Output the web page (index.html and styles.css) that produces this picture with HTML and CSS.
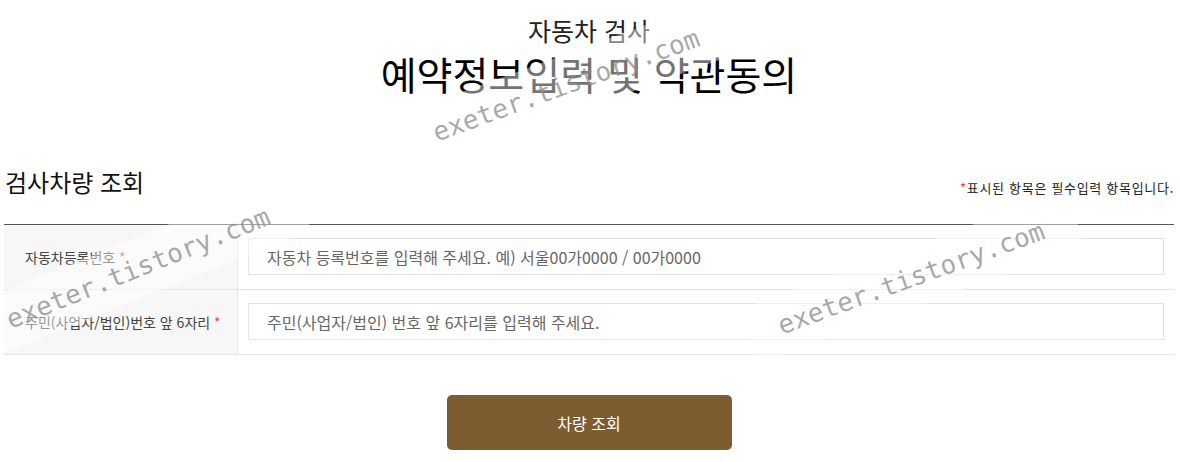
FILE: index.html
```html
<!DOCTYPE html>
<html lang="ko">
<head>
    <meta charset="UTF-8">
    <meta name="viewport" content="width=device-width, initial-scale=1.0">
    <title>자동차 검사 - 예약정보입력 및 약관동의</title>
    <link rel="stylesheet" href="styles.css">
</head>
<body>
    <div class="page">
        <div class="page-head">
            <p class="sub-title">자동차 검사</p>
            <h1 class="main-title">예약정보입력 및 약관동의</h1>
        </div>

        <div class="section-head">
            <h2 class="section-title">검사차량 조회</h2>
            <p class="note"><span class="req">*</span>표시된 항목은 필수입력 항목입니다.</p>
        </div>

        <div class="form-table">
            <div class="row">
                <label class="label" for="carNo"><span>자동차등록번호 <span class="req">*</span></span></label>
                <div class="field">
                    <input type="text" class="input" id="carNo" placeholder="자동차 등록번호를 입력해 주세요. 예) 서울00가0000 / 00가0000">
                </div>
            </div>
            <div class="row">
                <label class="label" for="birth"><span>주민(사업자/법인)번호 앞 6자리 <span class="req">*</span></span></label>
                <div class="field">
                    <input type="text" class="input" id="birth" placeholder="주민(사업자/법인) 번호 앞 6자리를 입력해 주세요.">
                </div>
            </div>
        </div>

        <div class="actions">
            <button class="btn-search">차량 조회</button>
        </div>
    </div>

    <!-- watermarks -->
    <div class="watermark wm-top">exeter.tistory.com</div>
    <div class="watermark wm-left">exeter.tistory.com</div>
    <div class="watermark wm-right">exeter.tistory.com</div>
</body>
</html>
```

FILE: styles.css
```css
body {
    margin: 0;
    font-family: "Noto Sans CJK KR", "Noto Sans", sans-serif;
    color: #222;
    background-color: #fff;
    position: relative;
    height: 462px;
    overflow: hidden;
}
.page {
    width: 1170px;
    margin: 0 4px;
}

.page-head {
    text-align: center;
    padding-top: 13px;
}
.sub-title {
    margin: 0;
    font-size: 25px;
    line-height: 34px;
    color: #222;
}
.main-title {
    margin: 0;
    font-size: 39px;
    font-weight: 400;
    line-height: 52px;
    color: #000;
}

.section-head {
    display: flex;
    justify-content: space-between;
    align-items: flex-end;
    margin-top: 68px;
    padding-bottom: 27px;
    border-bottom: 1px solid #555;
}
.section-title {
    margin: 0 0 0 1px;
    font-size: 24px;
    font-weight: 400;
    line-height: 30px;
    color: #111;
}
.note {
    margin: 0;
    font-size: 13px;
    line-height: 18px;
    letter-spacing: 0.7px;
    color: #222;
}
.req {
    color: #e2483f;
}

.form-table .row {
    display: grid;
    grid-template-columns: 234px 1fr;
    border-bottom: 1px solid #e5e5e5;
}
.form-table .label {
    display: flex;
    align-items: center;
    padding-left: 21px;
    font-size: 14px;
    color: #444;
    background-color: #f7f7f7;
    border-right: 1px solid #e5e5e5;
}
.form-table .field {
    padding: 13px 10px 14px 10px;
}
.input {
    display: block;
    width: 100%;
    box-sizing: border-box;
    height: 37px;
    padding: 0 18px;
    border: 1px solid #e3e3e3;
    font-family: inherit;
    font-size: 16px;
    color: #333;
    outline: none;
}
.input::placeholder {
    color: #666;
}

.actions {
    display: flex;
    justify-content: center;
    margin-top: 40px;
}
.btn-search {
    width: 285px;
    height: 55px;
    border: none;
    border-radius: 5px;
    background-color: #7d5c31;
    color: #fff;
    font-family: inherit;
    font-size: 16px;
    cursor: pointer;
}

.watermark {
    position: absolute;
    transform: translate(-50%, -50%) rotate(-20deg);
    padding: 14px 34px;
    background-color: rgba(255, 255, 255, 0.45);
    font-family: "DejaVu Sans Mono", monospace;
    font-size: 26px;
    line-height: 30px;
    white-space: nowrap;
    color: rgba(140, 140, 140, 0.75);
    pointer-events: none;
}
.wm-top {
    left: 566px;
    top: 85px;
}
.wm-left {
    left: 138px;
    top: 268px;
    transform: translate(-50%, -50%) rotate(-22deg);
}
.wm-right {
    left: 911px;
    top: 278px;
}
```
